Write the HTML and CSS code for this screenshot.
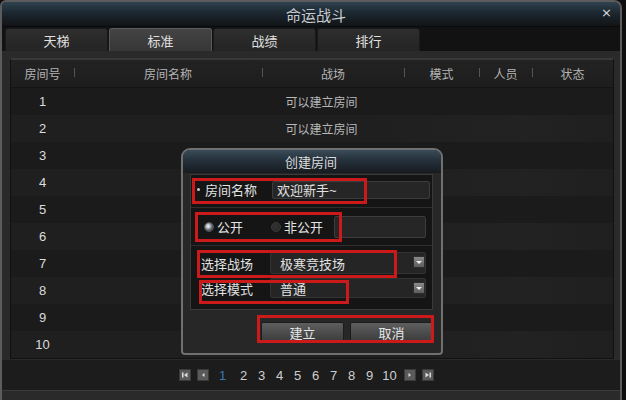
FILE: index.html
```html
<!DOCTYPE html>
<html>
<head>
    <title>命运战斗</title>
    <link rel="stylesheet" href="styles.css">
</head>
<body>
    <div class="window">
        <div class="titlebar">
            <span class="title">命运战斗</span>
            <span class="close">×</span>
        </div>

        <div class="tabs">
            <div class="tab">天梯</div>
            <div class="tab active">标准</div>
            <div class="tab">战绩</div>
            <div class="tab">排行</div>
        </div>

        <div class="body">
            <div class="table-wrap">
                <div class="table">
                    <div class="thead">
                        <div class="th">房间号</div>
                        <div class="th">房间名称</div>
                        <div class="th">战场</div>
                        <div class="th">模式</div>
                        <div class="th">人员</div>
                        <div class="th">状态</div>
                    </div>
                    <div class="rows">
                        <div class="row"><span class="num">1</span><span class="state">可以建立房间</span></div>
                        <div class="row"><span class="num">2</span><span class="state">可以建立房间</span></div>
                        <div class="row"><span class="num">3</span></div>
                        <div class="row"><span class="num">4</span></div>
                        <div class="row"><span class="num">5</span></div>
                        <div class="row"><span class="num">6</span></div>
                        <div class="row"><span class="num">7</span></div>
                        <div class="row"><span class="num">8</span></div>
                        <div class="row"><span class="num">9</span></div>
                        <div class="row"><span class="num">10</span></div>
                    </div>
                </div>
            </div>

            <div class="pager">
                <span class="pg-btn">
                    <svg width="12" height="12" viewBox="0 0 12 12"><rect x="3" y="3.5" width="1.5" height="5" fill="#ddd"/><path d="M8.5 3.5 L5 6 L8.5 8.5 Z" fill="#ddd"/></svg>
                </span>
                <span class="pg-btn">
                    <svg width="12" height="12" viewBox="0 0 12 12"><path d="M7.5 4 L5 6 L7.5 8 Z" fill="#ddd"/></svg>
                </span>
                <span class="pg current">1</span>
                <span class="pg">2</span>
                <span class="pg">3</span>
                <span class="pg">4</span>
                <span class="pg">5</span>
                <span class="pg">6</span>
                <span class="pg">7</span>
                <span class="pg">8</span>
                <span class="pg">9</span>
                <span class="pg">10</span>
                <span class="pg-btn">
                    <svg width="12" height="12" viewBox="0 0 12 12"><path d="M4.5 4 L7 6 L4.5 8 Z" fill="#ddd"/></svg>
                </span>
                <span class="pg-btn">
                    <svg width="12" height="12" viewBox="0 0 12 12"><path d="M3.5 3.5 L7 6 L3.5 8.5 Z" fill="#ddd"/><rect x="7.5" y="3.5" width="1.5" height="5" fill="#ddd"/></svg>
                </span>
            </div>
        </div>

        <div class="footer"></div>
    </div>

    <!-- create room dialog -->
    <div class="dialog">
        <div class="dlg-title">创建房间</div>
        <div class="dlg-panel">
            <div class="field name-field">
                <span class="dot"></span>
                <span class="label">房间名称</span>
                <div class="input">欢迎新手~</div>
            </div>
            <div class="field open-field">
                <span class="radio on"></span>
                <span class="opt">公开</span>
                <span class="radio"></span>
                <span class="opt">非公开</span>
                <div class="input pwd"></div>
            </div>
            <div class="selects">
                <div class="field sel-field">
                    <span class="label">选择战场</span>
                    <div class="select">极寒竞技场<span class="drop"></span></div>
                </div>
                <div class="field sel-field small">
                    <span class="label">选择模式</span>
                    <div class="select">普通<span class="drop"></span></div>
                </div>
            </div>
        </div>
        <div class="dlg-buttons">
            <div class="btn">建立</div>
            <div class="btn">取消</div>
        </div>

        <div class="mark m1"></div>
        <div class="mark m2"></div>
        <div class="mark m3"></div>
        <div class="mark m4"></div>
        <div class="mark m5"></div>
    </div>
</body>
</html>
```

FILE: styles.css
```css
* {
    box-sizing: border-box;
}

body {
    margin: 0;
    width: 626px;
    height: 400px;
    overflow: hidden;
    background: #0e0e0e;
    font-family: "Liberation Sans", "Noto Sans CJK SC", sans-serif;
    font-size: 12px;
    color: #ccc;
    position: relative;
}

.window {
    width: 622px;
    height: 400px;
    border: 2px solid #5c5c5c;
    border-bottom: none;
    border-radius: 6px 8px 0 0;
    background: #262626;
    display: flex;
    flex-direction: column;
    overflow: hidden;
}

.titlebar {
    height: 25px;
    flex: none;
    position: relative;
    display: flex;
    justify-content: center;
    align-items: center;
    background: linear-gradient(#2f4350 0%, #1c2730 45%, #121416 100%);
    border-bottom: 1px solid #0a0a0a;
}

.title {
    font-size: 15px;
    color: #c8ccd0;
    padding-left: 10px;
}

.close {
    position: absolute;
    right: 8px;
    top: 3px;
    font-size: 13px;
    color: #ddd;
    font-family: "DejaVu Sans", sans-serif;
}

.tabs {
    height: 24px;
    flex: none;
    display: flex;
    gap: 1px;
    padding: 1px 0 0 3px;
    background: #121212;
}

.tab {
    width: 103px;
    height: 23px;
    display: flex;
    justify-content: center;
    align-items: center;
    font-size: 13px;
    color: #e0e0e0;
    background: linear-gradient(#2e2e2e, #242424);
    border: 1px solid #1a1a1a;
    border-bottom: none;
    border-radius: 3px 3px 0 0;
}

.tab.active {
    background: linear-gradient(#444, #363636);
    border-color: #5a5a5a;
}

.body {
    flex: 1;
    display: flex;
    flex-direction: column;
    background: #1c1c1c;
}

.table-wrap {
    padding: 7px 6px 1px 8px;
    background: #2a2a2a;
}

.table {
    border: 1px solid #111;
    border-top: 2px solid #383838;
    background: #1c1c1c;
}

.thead {
    height: 28px;
    display: grid;
    grid-template-columns: 63px 188px 142px 75px 53px 1fr;
    align-items: center;
    background: linear-gradient(#232323, #1d1d1d);
    border-bottom: 1px solid #141414;
}

.th {
    text-align: center;
    color: #b4b4b4;
    position: relative;
}

.th + .th::before {
    content: "";
    position: absolute;
    left: 0;
    top: 3px;
    width: 1px;
    height: 9px;
    background: #555;
}

.row {
    height: 27px;
    display: grid;
    grid-template-columns: 63px 1fr;
    align-items: center;
    background: #1b1b1c;
}

.row:nth-child(even) {
    background: linear-gradient(90deg, #1f1f20 60%, #222223 85%, #1f1f20);
}

.num {
    text-align: center;
    color: #dcdcdc;
    font-size: 13px;
}

.state {
    text-align: center;
    color: #b8b8b8;
    padding-right: 44px;
}

.pager {
    height: 30px;
    display: flex;
    justify-content: center;
    align-items: center;
    gap: 6px;
    padding-right: 10px;
    background: #1c1c1c;
}

.pg {
    width: 12px;
    text-align: center;
    font-size: 13px;
    color: #cfcfcf;
}

.pg:nth-last-child(3) {
    width: 16px;
}

.pg.current {
    color: #3a78b8;
    margin: 0 3px 0 2px;
}

.pg-btn {
    width: 12px;
    height: 12px;
    display: flex;
    background: #5a5a5a;
    border: 1px solid #3a3a3a;
}

.pg-btn svg {
    margin: -1px;
}

.footer {
    height: 10px;
    flex: none;
    background: #2a2a2a;
    border-top: 1px solid #3a3a3a;
}

/* dialog */
.dialog {
    position: absolute;
    left: 181px;
    top: 148px;
    width: 262px;
    height: 207px;
    border: 2px solid #707070;
    border-radius: 9px 9px 4px 4px;
    background: #272727;
    display: flex;
    flex-direction: column;
}

.dlg-title {
    height: 23px;
    flex: none;
    display: flex;
    justify-content: center;
    align-items: center;
    font-size: 13px;
    color: #dcdcdc;
    padding-right: 2px;
    border-radius: 7px 7px 0 0;
    background: linear-gradient(#3a4c58 0%, #24303a 45%, #171b1f 100%);
}

.dlg-panel {
    margin: 1px 8px 0 7px;
    height: 136px;
    background: #151515;
    border: 1px solid #3a3a3a;
    display: flex;
    flex-direction: column;
}

.field {
    display: flex;
    align-items: center;
    color: #e2e2e2;
    font-size: 13px;
}

.name-field {
    height: 33px;
    padding: 0 2px 3px 6px;
    border-bottom: 1px solid #2e2e2e;
}

.dot {
    width: 3px;
    height: 3px;
    border-radius: 50%;
    background: #ccc;
    margin-right: 5px;
}

.label {
    width: 69px;
    flex: none;
}

.name-field .label {
    width: 67px;
}

.input {
    flex: 1;
    height: 18px;
    display: flex;
    align-items: center;
    padding-left: 4px;
    background: #262626;
    border: 1px solid #3c3c3c;
    border-radius: 2px;
}

.open-field {
    height: 38px;
    padding: 0 6px 0 13px;
    border-bottom: 1px solid #2e2e2e;
}

.radio {
    width: 10px;
    height: 10px;
    border-radius: 50%;
    background: radial-gradient(circle at 40% 40%, #333 0, #2a2a2a 60%);
    border: 1px solid #3a3a3a;
    margin-right: 3px;
}

.radio.on {
    background: radial-gradient(circle at 40% 40%, #fff 0, #bcc4cc 25%, #56606a 60%, #2a2e32 100%);
    border-color: #555;
}

.opt {
    width: 54px;
}

.opt:last-of-type {
    width: 50px;
}

.input.pwd {
    height: 22px;
}

.selects {
    flex: 1;
    display: flex;
    flex-direction: column;
    padding: 6px 6px 0 10px;
    gap: 4px;
}

.sel-field {
    height: 22px;
}

.sel-field.small {
    height: 20px;
}

.select {
    flex: 1;
    height: 100%;
    display: flex;
    align-items: center;
    padding-left: 9px;
    background: #252525;
    border: 1px solid #333;
    border-radius: 2px;
    position: relative;
}

.drop {
    position: absolute;
    right: 0;
    top: 3px;
    width: 12px;
    height: 12px;
    background: linear-gradient(#8a8a8a, #5c5c5c);
    border: 1px solid #2c2c2c;
}

.drop::after {
    content: "";
    position: absolute;
    left: 2px;
    top: 4px;
    border-left: 3px solid transparent;
    border-right: 3px solid transparent;
    border-top: 3px solid #eee;
}

.dlg-buttons {
    display: flex;
    justify-content: flex-end;
    gap: 6px;
    padding: 12px 8px 0 0;
}

.btn {
    width: 83px;
    height: 20px;
    display: flex;
    justify-content: center;
    align-items: center;
    font-size: 13px;
    color: #e6e6e6;
    background: linear-gradient(#5e5e5e, #3c3c3c);
    border: 1px solid #1c1c1c;
    border-radius: 2px;
}

/* red annotation boxes */
.mark {
    position: absolute;
    border: 3px solid #cc1a1a;
}

.m1 { left: 9px;  top: 28px;  width: 175px; height: 26px; }
.m2 { left: 12px; top: 62px;  width: 147px; height: 30px; }
.m3 { left: 14px; top: 100px; width: 200px; height: 28px; }
.m4 { left: 16px; top: 130px; width: 150px; height: 24px; }
.m5 { left: 74px; top: 165px; width: 177px; height: 28px; }
```
